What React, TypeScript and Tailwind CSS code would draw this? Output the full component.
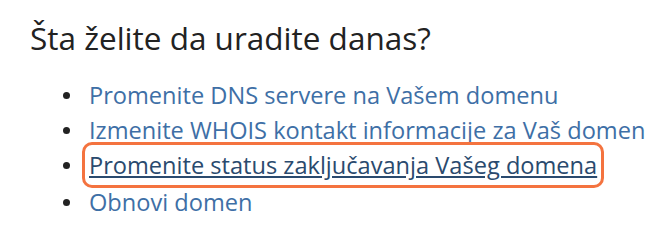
const links = [
  'Promenite DNS servere na Vašem domenu',
  'Izmenite WHOIS kontakt informacije za Vaš domen',
  'Promenite status zaključavanja Vašeg domena',
  'Obnovi domen',
];

export default function App() {
  return (
    <div className="h-[237px] w-[668px] bg-white pl-[30px] pt-[16px] font-['Open_Sans',sans-serif]">
      <h2 className="text-[31.5px] leading-[44px] text-[#222]">Šta želite da uradite danas?</h2>
      <ul className="mt-[18px] pl-[33px] text-[23.6px] leading-[35px]">
        {links.map((label, i) => (
          <li key={label} className={`flex items-center gap-[19px] ${i === 3 ? 'mt-[2px]' : ''}`}>
            <span className="h-[7px] w-[7px] shrink-0 rounded-full bg-[#222]" />
            <span className="whitespace-nowrap">
              {i === 2 ? (
                <span className="-ml-[7px] rounded-[10px] border-[3px] border-[#f4733f] px-[4px] py-[4px]">
                  <a href="#" className="text-[#2a4a6e] underline">{label}</a>
                </span>
              ) : (
                <a href="#" className="text-[#3e6fa6]">{label}</a>
              )}
            </span>
          </li>
        ))}
      </ul>
    </div>
  );
}
